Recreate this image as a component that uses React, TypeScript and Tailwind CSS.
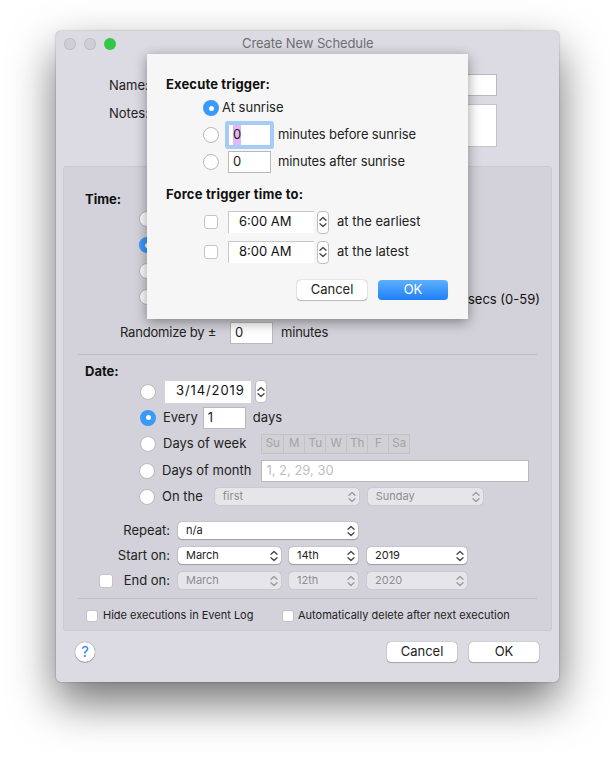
const FONT = "font-['Inter','Liberation_Sans',sans-serif]"

function Radio({ on = false, className = '' }: { on?: boolean; className?: string }) {
  if (on) {
    return (
      <span className={`flex h-4 w-4 shrink-0 items-center justify-center rounded-full bg-[#3b99fc] ${className}`}>
        <span className="h-[5px] w-[5px] rounded-full bg-white" />
      </span>
    )
  }
  return <span className={`block h-4 w-4 shrink-0 rounded-full border border-[#b9b9b9] bg-white ${className}`} />
}

function Check({ className = 'h-[14px] w-[14px]' }: { className?: string }) {
  return <span className={`block shrink-0 rounded-[3px] border border-[#c4c4c4] bg-white ${className}`} />
}

function Field({ value, className = '', muted = false }: { value: string; className?: string; muted?: boolean }) {
  return (
    <span className={`flex h-[22px] shrink-0 items-center border border-[#b9b9bb] bg-white pl-[4px] ${muted ? 'text-[#c0c0c2]' : 'text-[#222]'} ${className}`}>
      {value}
    </span>
  )
}

function Arrows({ color = '#444' }: { color?: string }) {
  return (
    <svg width="8" height="12" viewBox="0 0 8 12" fill="none" stroke={color} strokeWidth="1.3" strokeLinecap="round" strokeLinejoin="round">
      <path d="M1 4.2 4 1.4l3 2.8" />
      <path d="M1 7.8l3 2.8 3-2.8" />
    </svg>
  )
}

function Stepper() {
  return (
    <span className="flex h-[23px] w-3 shrink-0 flex-col items-center justify-center rounded-[4px] border border-[#bdbdbd] bg-white">
      <Arrows />
    </span>
  )
}

function TimeField({ value, className = '' }: { value: string; className?: string }) {
  return (
    <span className={`flex h-[22px] shrink-0 items-center bg-white pb-[1px] text-[#111] ${className}`}>
      {value}
    </span>
  )
}

function Select({ value, className = '', disabled = false }: { value: string; className?: string; disabled?: boolean }) {
  return (
    <span
      className={`flex h-[17px] shrink-0 items-center justify-between rounded-[4px] pl-[8px] pr-[3px] text-[11px] ${
        disabled
          ? 'bg-[#e6e6ea] text-[#8d8d92] shadow-[0_0_1px_rgba(0,0,0,0.35)]'
          : 'bg-white text-[#222] shadow-[0_0_1px_rgba(0,0,0,0.6),0_1px_1px_rgba(0,0,0,0.2)]'
      } ${className}`}
    >
      {value}
      <Arrows color={disabled ? '#9a9a9e' : '#444'} />
    </span>
  )
}

function PushButton({ label, className = '' }: { label: string; className?: string }) {
  return (
    <span className={`flex h-[20px] w-[70px] items-center justify-center rounded-[4px] bg-white text-[#222] shadow-[0_0_1px_rgba(0,0,0,0.6),0_1px_1px_rgba(0,0,0,0.2)] ${className}`}>
      {label}
    </span>
  )
}

function WeekDays() {
  const days = ['Su', 'M', 'Tu', 'W', 'Th', 'F', 'Sa']
  return (
    <span className="ml-[15px] flex h-[20px] border border-[#c4c4c8] bg-[#d0d0d5]">
      {days.map((d, i) => (
        <span key={d} className={`flex w-[21px] items-center justify-center text-[11.5px] text-[#a3a3a8] ${i > 0 ? 'border-l border-[#c4c4c8]' : ''}`}>
          {d}
        </span>
      ))}
    </span>
  )
}

function TriggerSheet() {
  return (
    <div className="absolute left-[91px] top-[23px] h-[265px] w-[321px] bg-[#f6f6f6] pl-[19px] pt-[20px] shadow-[0_3px_12px_rgba(0,0,0,0.4)]">
      <div className="font-bold leading-[20px] tracking-[0.15px] text-[#111]">Execute trigger:</div>
      <div className="mt-[4px] flex h-[20px] items-center pl-[37px]">
        <Radio on />
        <span className="ml-[3px]">At sunrise</span>
      </div>
      <div className="mt-[6px] flex h-[22px] items-center pl-[37px]">
        <Radio />
        <span className="ml-[9px] flex h-[22px] w-[43px] items-center rounded-[1px] border border-[#a9c8ee] bg-white pl-[4px] shadow-[0_0_0_3px_#a6ccf9]">
          <span className="bg-[#e3b8f5]">0</span>
        </span>
        <span className="ml-[7px] tracking-[-0.13px]">minutes before sunrise</span>
      </div>
      <div className="mt-[5px] flex h-[22px] items-center pl-[37px]">
        <Radio />
        <Field value="0" className="ml-[9px] w-[43px]" />
        <span className="ml-[7px] tracking-[-0.1px]">minutes after sunrise</span>
      </div>
      <div className="mt-[11px] font-bold leading-[20px] tracking-[0.2px] text-[#111]">Force trigger time to:</div>
      <div className="mt-[6px] flex h-[24px] items-center pl-[38px]">
        <Check />
        <TimeField value="6:00 AM" className="ml-[10px] w-[86px] border-t border-l border-[#c8c8c8] pl-[10px]" />
        <span className="ml-[3px]"><Stepper /></span>
        <span className="ml-[8px]">at the earliest</span>
      </div>
      <div className="mt-[6px] flex h-[24px] items-center pl-[38px]">
        <Check />
        <TimeField value="8:00 AM" className="ml-[10px] w-[86px] border-t border-l border-[#c8c8c8] pl-[10px]" />
        <span className="ml-[3px]"><Stepper /></span>
        <span className="ml-[8px]">at the latest</span>
      </div>
      <div className="mt-[16px] flex pl-[131px]">
        <PushButton label="Cancel" />
        <span className="ml-[11px] flex h-[20px] w-[70px] items-center justify-center rounded-[4px] bg-gradient-to-b from-[#5db0fb] to-[#1d7ff8] text-white">OK</span>
      </div>
    </div>
  )
}

export default function App() {
  return (
    <div className={`h-[762px] w-[615px] overflow-hidden bg-white pl-[56px] pt-[31px] text-[13px] text-[#222] ${FONT}`}>
      <div className="relative h-[651px] w-[503px] rounded-[5px] bg-[#dcdbe3] shadow-[0_20px_45px_rgba(0,0,0,0.56),0_0_2px_rgba(0,0,0,0.35)]">
        {/* title bar */}
        <div className="flex h-[25px] items-center pl-[8px]">
          <span className="h-3 w-3 rounded-full bg-[#cfced3] shadow-[inset_0_0_0_1px_#bfbec3]" />
          <span className="ml-2 h-3 w-3 rounded-full bg-[#cfced3] shadow-[inset_0_0_0_1px_#bfbec3]" />
          <span className="ml-2 h-3 w-3 rounded-full bg-[#33c748]" />
          <span className="ml-[126px] tracking-[-0.1px] text-[#6f6f72]">Create New Schedule</span>
        </div>

        {/* name and notes */}
        <div className="mt-[18px] flex items-center pl-[53px]">
          <span className="w-[40px] pt-[2px]">Name:</span>
          <span className="block h-[22px] w-[348px] border border-[#b9b9bb] bg-white" />
        </div>
        <div className="mt-[8px] flex items-start pl-[53px]">
          <span className="w-[40px]">Notes:</span>
          <span className="block h-[43px] w-[348px] border border-[#c4c4c6] bg-white" />
        </div>

        {/* schedule panel */}
        <div className="ml-[7px] mt-[19px] h-[465px] w-[489px] rounded-[3px] border border-[#cbcad1] bg-[#d3d2da] pl-[14px] pr-[14px]">
          <div className="pl-[7px] pt-[23px] font-bold leading-[18px] text-[#111]">Time:</div>
          <div className="mt-[3px] flex flex-col gap-[10px] pl-[61px]">
            <Radio />
            <Radio on />
            <Radio />
            <Radio />
          </div>
          <div className="mt-[-15px] flex justify-end text-[#111]">
            <span className="mr-[-3px]">secs (0-59)</span>
          </div>
          <div className="mt-[13px] flex h-[21px] items-center pl-[42px]">
            <span className="w-[110px] tracking-[-0.2px]">Randomize by ±</span>
            <Field value="0" className="w-[43px]" />
            <span className="ml-[8px] tracking-[-0.2px]">minutes</span>
          </div>
          <div className="mt-[10px] border-t border-[#bdbcc4]" />

          <div className="mt-[7px] pl-[7px] font-bold leading-[18px] text-[#111]">Date:</div>
          <div className="mt-[1px] flex h-[22px] items-center pl-[62px]">
            <Radio />
            <TimeField value="3/14/2019" className="ml-[9px] w-[86px] pl-[11px] tracking-[0.9px]" />
            <span className="ml-[4px]"><Stepper /></span>
          </div>
          <div className="mt-[4px] flex h-[22px] items-center pl-[62px]">
            <Radio on />
            <span className="ml-[7px]">Every</span>
            <Field value="1" className="ml-[5px] w-[43px]" />
            <span className="ml-[7px]">days</span>
          </div>
          <div className="mt-[4px] flex h-[22px] items-center pl-[62px]">
            <Radio />
            <span className="ml-[7px]">Days of week</span>
            <WeekDays />
          </div>
          <div className="mt-[5px] flex h-[22px] items-center pl-[61px]">
            <Radio />
            <span className="ml-[7px]">Days of month</span>
            <Field value="1, 2, 29, 30" muted className="ml-[10px] w-[268px]" />
          </div>
          <div className="mt-[4px] flex h-[22px] items-center pl-[61px]">
            <Radio />
            <span className="ml-[7px]">On the</span>
            <Select value="first" disabled className="ml-[12px] w-[144px]" />
            <Select value="Sunday" disabled className="ml-[9px] w-[115px]" />
          </div>

          <div className="mt-[13px] flex h-[20px] items-center">
            <span className="w-[92px] text-right">Repeat:</span>
            <Select value="n/a" className="ml-[8px] w-[180px]" />
          </div>
          <div className="mt-[5px] flex h-[20px] items-center">
            <span className="w-[92px] text-right">Start on:</span>
            <Select value="March" className="ml-[8px] w-[103px]" />
            <Select value="14th" className="ml-[8px] w-[69px]" />
            <Select value="2019" className="ml-[9px] w-[100px]" />
          </div>
          <div className="mt-[5px] flex h-[20px] items-center">
            <span className="flex w-[92px] items-center justify-between pl-[21px]">
              <Check />
              <span>End on:</span>
            </span>
            <Select value="March" disabled className="ml-[8px] w-[103px]" />
            <Select value="12th" disabled className="ml-[8px] w-[69px]" />
            <Select value="2020" disabled className="ml-[9px] w-[100px]" />
          </div>
          <div className="mt-[7px] border-t border-[#bdbcc4]" />
          <div className="mt-[10px] flex h-[14px] items-center whitespace-nowrap pl-[8px] text-[11px]">
            <Check className="h-[12px] w-[12px]" />
            <span className="ml-[4px] w-[179px] pl-[1px]">Hide executions in Event Log</span>
            <Check className="ml-[1px] h-[12px] w-[12px]" />
            <span className="ml-[4px]">Automatically delete after next execution</span>
          </div>
        </div>

        {/* footer */}
        <div className="mt-[11px] flex items-center pl-[19px]">
          <span className="flex h-[20px] w-[20px] items-center justify-center rounded-full bg-white text-[15px] text-[#2e82f6] shadow-[0_0_1px_rgba(0,0,0,0.6),0_1px_1px_rgba(0,0,0,0.2)]">?</span>
          <PushButton label="Cancel" className="ml-[292px]" />
          <PushButton label="OK" className="ml-[12px]" />
        </div>

        <TriggerSheet />
      </div>
    </div>
  )
}
